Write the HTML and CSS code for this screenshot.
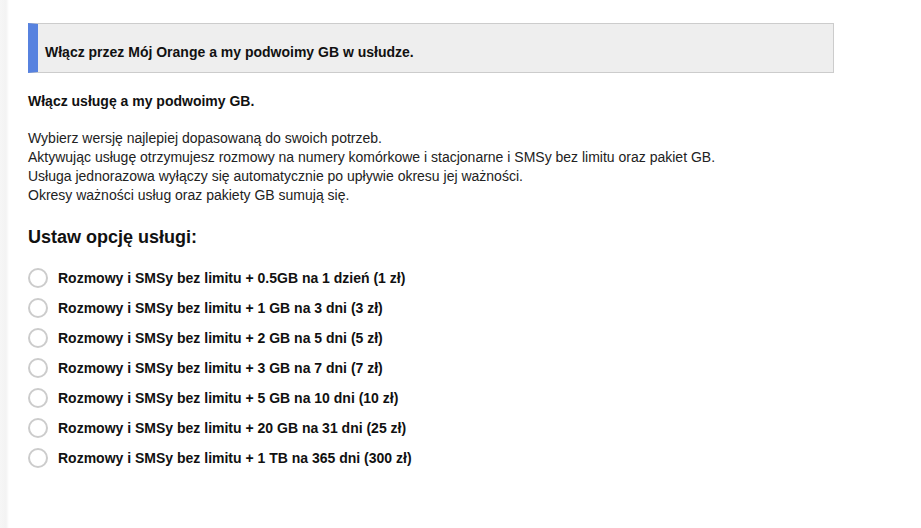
FILE: index.html
```html
<!DOCTYPE html>
<html lang="pl">
<head>
    <meta charset="UTF-8">
    <meta name="viewport" content="width=device-width, initial-scale=1.0">
    <title>Usługi - Mój Orange</title>
    <link rel="stylesheet" href="styles.css">
</head>
<body>
    <div class="page">
        <div class="notice">Włącz przez Mój Orange a my podwoimy GB w usłudze.</div>

        <p class="lead">Włącz usługę a my podwoimy GB.</p>

        <p class="info">
            Wybierz wersję najlepiej dopasowaną do swoich potrzeb.<br>
            Aktywując usługę otrzymujesz rozmowy na numery komórkowe i stacjonarne i SMSy bez limitu oraz pakiet GB.<br>
            Usługa jednorazowa wyłączy się automatycznie po upływie okresu jej ważności.<br>
            Okresy ważności usług oraz pakiety GB sumują się.
        </p>

        <h2>Ustaw opcję usługi:</h2>

        <form class="options">
            <label class="option"><input type="radio" name="opt"><span class="dot"></span>Rozmowy i SMSy bez limitu + 0.5GB na 1 dzień (1 zł)</label>
            <label class="option"><input type="radio" name="opt"><span class="dot"></span>Rozmowy i SMSy bez limitu + 1 GB na 3 dni (3 zł)</label>
            <label class="option"><input type="radio" name="opt"><span class="dot"></span>Rozmowy i SMSy bez limitu + 2 GB na 5 dni (5 zł)</label>
            <label class="option"><input type="radio" name="opt"><span class="dot"></span>Rozmowy i SMSy bez limitu + 3 GB na 7 dni (7 zł)</label>
            <label class="option"><input type="radio" name="opt"><span class="dot"></span>Rozmowy i SMSy bez limitu + 5 GB na 10 dni (10 zł)</label>
            <label class="option"><input type="radio" name="opt"><span class="dot"></span>Rozmowy i SMSy bez limitu + 20 GB na 31 dni (25 zł)</label>
            <label class="option"><input type="radio" name="opt"><span class="dot"></span>Rozmowy i SMSy bez limitu + 1 TB na 365 dni (300 zł)</label>
        </form>
    </div>
</body>
</html>
```

FILE: styles.css
```css
body {
    margin: 0;
    font-family: "Liberation Sans", Arial, sans-serif;
    font-size: 14px;
    color: #111;
    background: #fff linear-gradient(to right, #f6f6f6 0, #f3f3f3 6px, #fff 9px) no-repeat;
    min-height: 528px;
}

.page {
    width: 806px;
    padding: 23px 0 0 28px;
}

.notice {
    background-color: #eee;
    border: 1px solid #ccc;
    border-left: 10px solid #5782df;
    padding: 20px 10px 11px 7px;
    font-weight: bold;
    line-height: 17px;
}

.lead {
    margin: 20px 0 0;
    font-weight: bold;
    line-height: 17px;
}

.info {
    margin: 19px 0 0;
    line-height: 19px;
    color: #222;
}

h2 {
    margin: 21px 0 0;
    font-size: 18px;
    line-height: 22px;
}

.options {
    margin-top: 15px;
}

.option {
    display: flex;
    align-items: center;
    height: 30px;
    font-weight: bold;
    cursor: pointer;
}

.option input {
    display: none;
}

.dot {
    box-sizing: border-box;
    width: 20px;
    height: 20px;
    border: 2px solid #ccc;
    border-radius: 50%;
    margin-right: 10px;
}

.option input:checked + .dot {
    border: 6px solid #ff7900;
}
```
